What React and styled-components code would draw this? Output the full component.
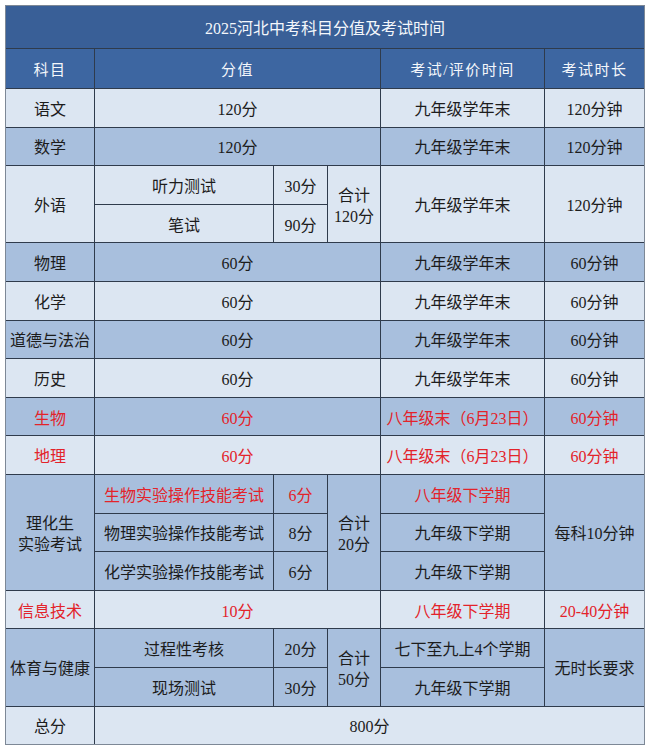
import React from 'react';
import styled, { createGlobalStyle } from 'styled-components';

const GlobalStyle = createGlobalStyle`
  html, body {
    margin: 0;
    padding: 0;
    background: #ffffff;
  }
  body {
    font-family: "Liberation Serif", "Noto Sans CJK SC", serif;
  }
`;

const Page = styled.div`
  padding: 5px;
  width: 640px;
`;

const Table = styled.div`
  display: grid;
  grid-template-columns: 88px 178px 53px 52px 163px 99px;
  grid-template-rows: 42px 39px repeat(17, 37.6px);
  gap: 1px;
  padding: 1px;
  background: #2f3b4c;
  box-shadow: inset 0 0 0 1px #7d8896;
`;

const tones = {
  title: '#395f97',
  head: '#3d66a1',
  light: '#dce6f2',
  dark: '#a8bfdd',
};

const Cell = styled.div`
  grid-column: ${(p) => p.$col || 'auto'};
  grid-row: ${(p) => p.$row || 'auto'};
  background: ${(p) => tones[p.$tone || 'light']};
  color: ${(p) => (p.$red ? '#e3232a' : p.$tone === 'head' || p.$tone === 'title' ? '#f4f7fb' : '#1c1c1c')};
  font-size: ${(p) => (p.$tone === 'head' ? '15px' : '16px')};
  letter-spacing: ${(p) => (p.$tone === 'head' ? '1.5px' : '0')};
  line-height: 21px;
  display: flex;
  align-items: center;
  justify-content: center;
  text-align: center;
  white-space: pre-line;
  padding-top: 3px;
  box-sizing: border-box;
`;

const rows = [
  // simple subject rows: [name, score, time, duration, tone, red, gridRow]
  ['语文', '120分', '九年级学年末', '120分钟', 'light', false, 3],
  ['数学', '120分', '九年级学年末', '120分钟', 'dark', false, 4],
  ['物理', '60分', '九年级学年末', '60分钟', 'dark', false, 7],
  ['化学', '60分', '九年级学年末', '60分钟', 'light', false, 8],
  ['道德与法治', '60分', '九年级学年末', '60分钟', 'dark', false, 9],
  ['历史', '60分', '九年级学年末', '60分钟', 'light', false, 10],
  ['生物', '60分', '八年级末（6月23日）', '60分钟', 'dark', true, 11],
  ['地理', '60分', '八年级末（6月23日）', '60分钟', 'light', true, 12],
  ['信息技术', '10分', '八年级下学期', '20-40分钟', 'light', true, 16],
];

const labs = [
  ['生物实验操作技能考试', '6分', '八年级下学期', true],
  ['物理实验操作技能考试', '8分', '九年级下学期', false],
  ['化学实验操作技能考试', '6分', '九年级下学期', false],
];

export default function App() {
  return (
    <>
      <GlobalStyle />
      <Page>
        <Table>
          <Cell $col="1 / -1" $row="1" $tone="title">2025河北中考科目分值及考试时间</Cell>

          <Cell $col="1" $row="2" $tone="head">科目</Cell>
          <Cell $col="2 / 5" $row="2" $tone="head">分值</Cell>
          <Cell $col="5" $row="2" $tone="head">考试/评价时间</Cell>
          <Cell $col="6" $row="2" $tone="head">考试时长</Cell>

          {rows.map(([name, score, time, dur, tone, red, r]) => (
            <React.Fragment key={name}>
              <Cell $col="1" $row={r} $tone={tone} $red={red}>{name}</Cell>
              <Cell $col="2 / 5" $row={r} $tone={tone} $red={red}>{score}</Cell>
              <Cell $col="5" $row={r} $tone={tone} $red={red}>{time}</Cell>
              <Cell $col="6" $row={r} $tone={tone} $red={red}>{dur}</Cell>
            </React.Fragment>
          ))}

          {/* 外语 */}
          <Cell $col="1" $row="5 / 7">外语</Cell>
          <Cell $col="2" $row="5">听力测试</Cell>
          <Cell $col="3" $row="5">30分</Cell>
          <Cell $col="2" $row="6">笔试</Cell>
          <Cell $col="3" $row="6">90分</Cell>
          <Cell $col="4" $row="5 / 7">{'合计\n120分'}</Cell>
          <Cell $col="5" $row="5 / 7">九年级学年末</Cell>
          <Cell $col="6" $row="5 / 7">120分钟</Cell>

          {/* 理化生实验 */}
          <Cell $col="1" $row="13 / 16" $tone="dark">{'理化生\n实验考试'}</Cell>
          {labs.map(([name, score, time, red], i) => (
            <React.Fragment key={name}>
              <Cell $col="2" $row={13 + i} $tone="dark" $red={red}>{name}</Cell>
              <Cell $col="3" $row={13 + i} $tone="dark" $red={red}>{score}</Cell>
              <Cell $col="5" $row={13 + i} $tone="dark" $red={red}>{time}</Cell>
            </React.Fragment>
          ))}
          <Cell $col="4" $row="13 / 16" $tone="dark">{'合计\n20分'}</Cell>
          <Cell $col="6" $row="13 / 16" $tone="dark">每科10分钟</Cell>

          {/* 体育与健康 */}
          <Cell $col="1" $row="17 / 19" $tone="dark">体育与健康</Cell>
          <Cell $col="2" $row="17" $tone="dark">过程性考核</Cell>
          <Cell $col="3" $row="17" $tone="dark">20分</Cell>
          <Cell $col="2" $row="18" $tone="dark">现场测试</Cell>
          <Cell $col="3" $row="18" $tone="dark">30分</Cell>
          <Cell $col="4" $row="17 / 19" $tone="dark">{'合计\n50分'}</Cell>
          <Cell $col="5" $row="17" $tone="dark">七下至九上4个学期</Cell>
          <Cell $col="5" $row="18" $tone="dark">九年级下学期</Cell>
          <Cell $col="6" $row="17 / 19" $tone="dark">无时长要求</Cell>

          <Cell $col="1" $row="19">总分</Cell>
          <Cell $col="2 / -1" $row="19">800分</Cell>
        </Table>
      </Page>
    </>
  );
}
